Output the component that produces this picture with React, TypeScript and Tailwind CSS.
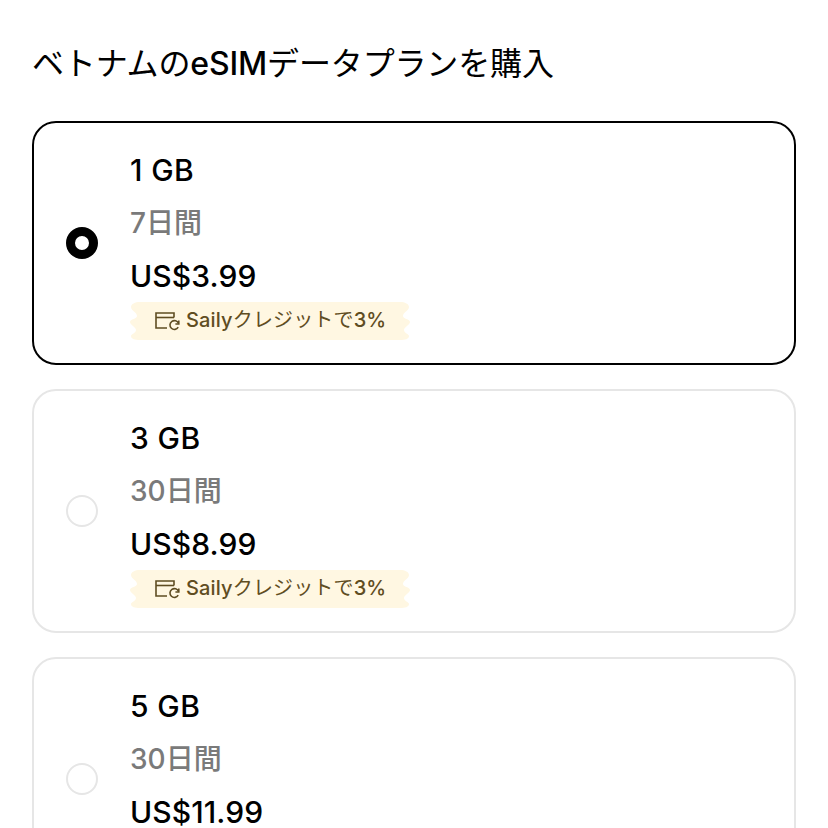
const plans = [
  { id: "1gb", size: "1 GB", days: "7日間", price: "US$3.99", selected: true },
  { id: "3gb", size: "3 GB", days: "30日間", price: "US$8.99", selected: false },
  { id: "5gb", size: "5 GB", days: "30日間", price: "US$11.99", selected: false },
];

function CreditBadge() {
  return (
    <div className="relative -mt-[1px] flex h-[40px] w-[280px] items-center pl-[24px]">
      <svg className="absolute inset-0" width="280" height="40" viewBox="0 0 280 40">
        <path
          d="M10 1H270C275 1 279 3 279 6C279 10 273 11 273 15C273 18 280 18 280 21C280 24 274 26 274 29C274 32 279 33 279 35C279 38 275 39 270 39H10C5 39 1 38 1 35C1 33 6 32 6 29C6 26 0 24 0 21C0 18 7 18 7 15C7 11 1 10 1 6C1 3 5 1 10 1Z"
          fill="#fff7e2"
        />
      </svg>
      <svg className="relative shrink-0" width="26" height="20" viewBox="0 0 26 20" fill="none" stroke="#5f4d22" strokeWidth="1.6">
        <path d="M13 17H2V2H20V6.5" />
        <path d="M2 6.5H20" />
        <path d="M24.5 12.5A4.4 4.4 0 1 0 24.2 16.2" />
        <path d="M24.8 9.5V13H21.4" />
      </svg>
      <span className="relative ml-[6px] -translate-y-[1px] text-[20px] leading-none tracking-[0.15px] text-[#5f4d22]">
        <span className="font-medium">Saily</span>クレジットで<span className="font-medium">3%</span>
      </span>
    </div>
  );
}

function PlanCard({ plan }: { plan: (typeof plans)[number] }) {
  return (
    <div
      className={`flex h-[244px] shrink-0 items-center gap-[32px] rounded-[24px] border-2 pl-[32px] ${
        plan.selected ? "border-black" : "border-[#e6e6e6]"
      }`}
    >
      {plan.selected ? (
        <div className="h-[32px] w-[32px] shrink-0 rounded-full border-[9px] border-black" />
      ) : (
        <div className="h-[32px] w-[32px] shrink-0 rounded-full border-2 border-[#e6e6e6]" />
      )}
      <div className="flex flex-col">
        <div className="h-[52px] text-[30px] leading-[48px] font-medium tracking-[0.4px] text-black">{plan.size}</div>
        <div className="h-[52px] text-[28px] leading-[50px] font-medium text-[#7a7a7a]">{plan.days}</div>
        <div className="h-[52px] text-[30px] leading-[52px] font-medium tracking-[0.1px] text-black">{plan.price}</div>
        <CreditBadge />
      </div>
    </div>
  );
}

export default function App() {
  return (
    <div
      className="flex h-[828px] w-[828px] flex-col overflow-hidden bg-white px-[32px] pt-[42px]"
      style={{ fontFamily: '"Inter", "Noto Sans CJK JP", sans-serif' }}
    >
      <h1 className="mb-[35px] h-[44px] text-[32px] leading-[44px] font-normal tracking-[-0.15px] whitespace-nowrap text-black">
        ベトナムの<span className="font-medium">eSIM</span>データプランを購入
      </h1>
      <div className="flex flex-col gap-[24px]">
        {plans.map((plan) => (
          <PlanCard key={plan.id} plan={plan} />
        ))}
      </div>
    </div>
  );
}
